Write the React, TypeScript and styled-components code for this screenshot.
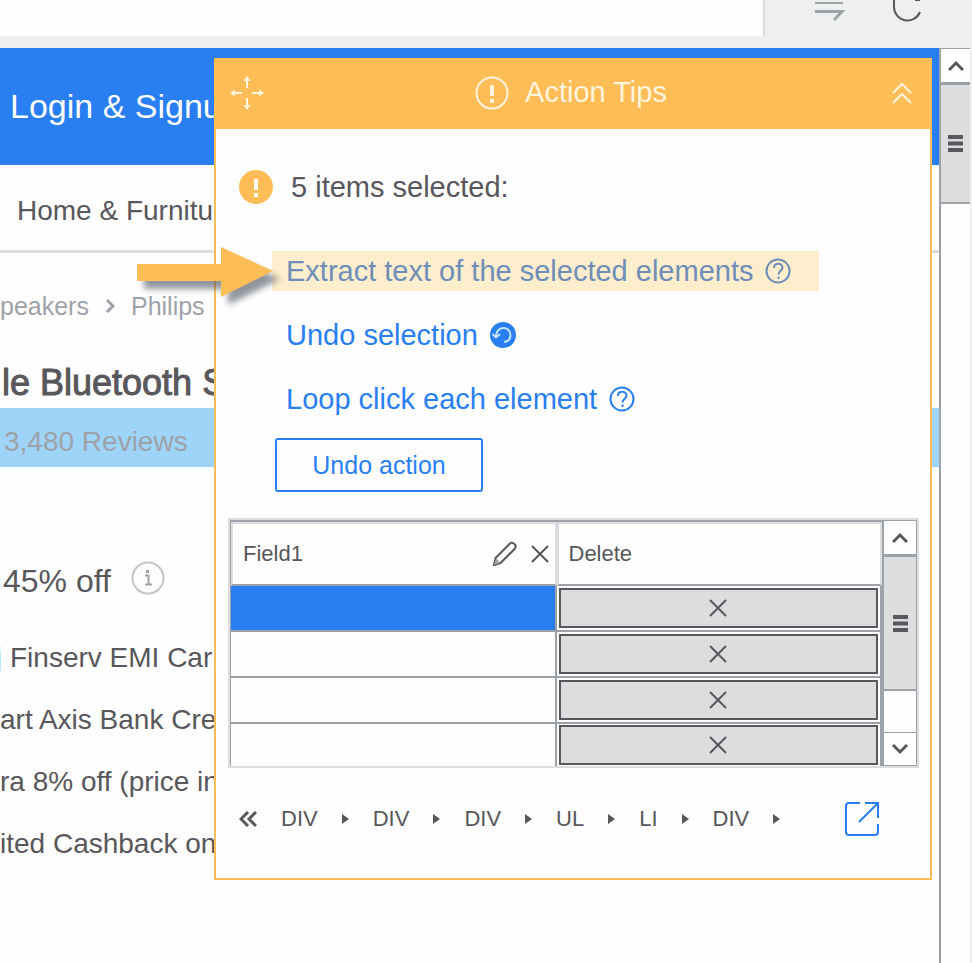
import React from "react";
import styled, { createGlobalStyle } from "styled-components";

const c = {
  blue: "#297ff2",
  sky: "#9fd4f9",
  orange: "#ffbd57",
  cream: "#feeecd",
  ink: "#58575b",
  grey: "#9da2a9",
  light: "#dcdddf",
  chrome: "#eeefef",
};

const GlobalStyle = createGlobalStyle`
  *, *::before, *::after { box-sizing: border-box; }
  html, body { margin: 0; padding: 0; }
  body {
    background: #fefefe;
    color: ${c.ink};
    font-family: "Liberation Sans", Arial, sans-serif;
    overflow: hidden;
  }
  button { font: inherit; color: inherit; background: none; border: 0; padding: 0; margin: 0; cursor: pointer; }
  a { color: inherit; text-decoration: none; }
  svg { display: block; flex: none; }
  h1, h2, p, ul, ol { margin: 0; padding: 0; list-style: none; font-weight: 400; }
`;

const Screen = styled.div`
  display: flex;
  flex-direction: column;
  min-height: 100vh;
`;

const BrowserBar = styled.header`
  display: flex;
  align-items: flex-start;
  height: 48px;
  background: ${c.chrome};
`;

const AddressArea = styled.div`
  flex: 1;
  height: 36px;
  background: #fefefe;
  border-right: 2px solid ${c.light};
`;

const BarTools = styled.div`
  display: flex;
  gap: 46px;
  padding: 0 49px 0 50px;
`;

const Viewport = styled.div`
  display: flex;
  flex: 1;
  border-right: 2px solid ${c.chrome};
`;

const Page = styled.main`
  position: relative;
  flex: 1;
  min-width: 0;
  white-space: nowrap;
`;

const SiteHeader = styled.div`
  display: flex;
  align-items: center;
  height: 117px;
  padding-left: 10px;
  background: ${c.blue};
  color: #fefefe;
  font-size: 34px;
`;

const SiteNav = styled.nav`
  display: flex;
  align-items: center;
  height: 88px;
  padding: 6px 0 0 17px;
  border-bottom: 3px solid ${c.light};
  font-size: 28px;
`;

const Trail = styled.nav`
  display: flex;
  align-items: center;
  gap: 16px;
  margin-top: 38px;
  font-size: 25px;
  line-height: 30px;
  color: ${c.grey};
`;

const ProductTitle = styled.h1`
  margin-top: 40px;
  padding-left: 2px;
  font-size: 36px;
  line-height: 44px;
  -webkit-text-stroke: 1px ${c.ink};
`;

const Reviews = styled.div`
  height: 59px;
  margin-top: 3px;
  padding: 14px 0 0 4px;
  background: ${c.sky};
  color: ${c.grey};
  font-size: 28px;
  line-height: 40px;
`;

const Discount = styled.div`
  display: flex;
  align-items: flex-start;
  gap: 20px;
  margin-top: 94px;
  padding-left: 3px;
  font-size: 32px;
  line-height: 40px;
`;

const Offers = styled.ul`
  margin-top: 26px;
  overflow: hidden;
`;

const Offer = styled.li<{ $shift?: number }>`
  height: 62px;
  font-size: 28px;
  line-height: 62px;
  text-indent: ${(p) => p.$shift ?? 0}px;
`;

const OfferLink = styled.a`
  color: ${c.sky};
`;

const Panel = styled.section`
  position: absolute;
  top: 10px;
  left: 214px;
  right: 7px;
  background: #fefefe;
  border: 2px solid ${c.orange};
`;

const PanelHead = styled.div`
  display: grid;
  grid-template-columns: 1fr auto 1fr;
  align-items: center;
  height: 69px;
  padding: 0 18px 4px 14px;
  background: ${c.orange};
  color: #fff4dc;
`;

const PanelTitle = styled.h2`
  display: flex;
  align-items: center;
  gap: 16px;
  font-size: 29px;
`;

const HeadButton = styled.button<{ $end?: boolean }>`
  justify-self: ${(p) => (p.$end ? "end" : "start")};
`;

const PanelBody = styled.div`
  padding: 38px 11px 41px 12px;
`;

const Status = styled.div`
  display: flex;
  align-items: center;
  gap: 18px;
  padding-left: 11px;
  font-size: 29px;
  line-height: 40px;
`;

const Actions = styled.ul`
  display: flex;
  flex-direction: column;
  align-items: flex-start;
  gap: 24px;
  margin: 44px 0 19px 44px;
`;

const Action = styled.button<{ $active?: boolean }>`
  display: flex;
  align-items: center;
  gap: 12px;
  height: 40px;
  padding: 0 28px 0 14px;
  background: ${(p) => (p.$active ? c.cream : "transparent")};
  color: ${(p) => (p.$active ? "#6f8db8" : c.blue)};
  font-size: 29px;
`;

const UndoButton = styled.button`
  display: block;
  width: 208px;
  height: 54px;
  margin-left: 47px;
  border: 2px solid ${c.blue};
  border-radius: 3px;
  color: ${c.blue};
  font-size: 25px;
`;

const GridFrame = styled.div`
  display: flex;
  margin-top: 26px;
  border: 2px solid ${c.light};
`;

const GridArea = styled.div`
  flex: 1;
  min-width: 0;
`;

const Grid = styled.table`
  width: 100%;
  table-layout: fixed;
  border-collapse: separate;
  border-spacing: 0;
  border-left: 1px solid ${c.grey};
  border-top: 2px solid ${c.grey};
`;

const HeadCell = styled.th`
  height: 64px;
  padding: 0 6px 0 10px;
  border: 2px solid ${c.light};
  border-bottom: 2px solid ${c.grey};
  text-align: left;
  font-size: 22px;
  font-weight: 400;
`;

const HeadRow = styled.div`
  display: flex;
  align-items: center;
  justify-content: space-between;
`;

const HeadTools = styled.div`
  display: flex;
  align-items: center;
  gap: 13px;
`;

const Cell = styled.td<{ $selected?: boolean; $last?: boolean }>`
  height: ${(p) => (p.$last ? 42 : 46)}px;
  padding: 0;
  border-right: 2px solid ${c.grey};
  border-bottom: ${(p) => (p.$last ? 0 : 2)}px solid ${c.grey};
  background: ${(p) => (p.$selected ? c.blue : "#fefefe")};
`;

const DeleteButton = styled.button`
  display: flex;
  align-items: center;
  justify-content: center;
  width: calc(100% - 4px);
  height: 40px;
  margin: 0 2px;
  background: ${c.light};
  border: 2px solid ${c.ink};
`;

const Scrollbar = styled.div<{ $width: number; $framed?: boolean }>`
  display: flex;
  flex: none;
  flex-direction: column;
  width: ${(p) => p.$width}px;
  border-left: 2px solid ${c.grey};
  border-right: ${(p) => (p.$framed ? 1 : 0)}px solid ${c.grey};
  background: #fefefe;
`;

const ScrollButton = styled.button<{ $end?: boolean }>`
  display: flex;
  align-items: center;
  justify-content: center;
  height: 34px;
  border-top: 1px solid ${c.grey};
  border-bottom: ${(p) => (p.$end ? 1 : 0)}px solid ${c.grey};
  margin-top: ${(p) => (p.$end ? "auto" : "0")};
`;

const Thumb = styled.div<{ $height: number }>`
  display: flex;
  align-items: center;
  justify-content: center;
  height: ${(p) => p.$height}px;
  background: ${c.light};
  border-top: 3px solid ${c.grey};
  border-bottom: 2px solid ${c.grey};
`;

const PathRow = styled.div`
  display: flex;
  align-items: center;
  justify-content: space-between;
  height: 36px;
  margin-top: 33px;
  padding: 0 40px 0 11px;
`;

const PathList = styled.nav`
  display: flex;
  align-items: center;
  gap: 24px;
  font-size: 22px;
`;

const Pointer = styled.svg`
  position: absolute;
  top: 197px;
  left: 135px;
  overflow: visible;
  filter: drop-shadow(7px 8px 3px rgba(70, 76, 90, 0.6));
`;

const line = { fill: "none", stroke: "currentColor", strokeWidth: 2 } as const;

const ForwardIcon = () => (
  <svg width="32" height="20" viewBox="0 0 32 20" fill="none" stroke={c.grey} strokeWidth="3">
    <path d="M0 .5H28M0 9.500H27L19 18" />
  </svg>
);

const ReloadIcon = () => (
  <svg width="30" height="24" viewBox="0 0 30 24" {...line} stroke={c.ink}>
    <path d="M1 0V7A13.500 13.500 0 0 0 27 12M22 0H27" />
  </svg>
);

const Chevron = ({ down }: { down?: boolean }) => (
  <svg width="16" height="12" viewBox="0 0 16 12" fill="none" stroke={c.ink} strokeWidth="3">
    <path d={down ? "M1 2L8 9L15 2" : "M1 10L8 3L15 10"} />
  </svg>
);

const Grip = () => (
  <svg width="15" height="17" viewBox="0 0 15 17" fill={c.ink}>
    <path d="M0 0H15V4H0ZM0 6.500H15V10.500H0ZM0 13H15V17H0Z" />
  </svg>
);

const MoveIcon = () => (
  <svg width="34" height="34" viewBox="0 0 34 34" fill="currentColor">
    <path d="M17 0L20.500 5H18V12H16V5H13.500ZM17 34L13.500 29H16V22H18V29H20.500ZM0 17L5 13.500V16H12V18H5V20.500ZM34 17L29 20.500V18H22V16H29V13.500Z" />
  </svg>
);

const AlertIcon = ({ filled }: { filled?: boolean }) => (
  <svg width="34" height="34" viewBox="0 0 34 34">
    <circle cx="17" cy="17" r={filled ? 17 : 15.5} fill={filled ? c.orange : "none"} stroke={filled ? "none" : "currentColor"} strokeWidth="2" />
    <path d="M15 9H19V20H15ZM15 23H19V27H15Z" fill={filled ? "#fefefe" : "currentColor"} />
  </svg>
);

const CollapseIcon = () => (
  <svg width="20" height="22" viewBox="0 0 20 22" {...line}>
    <path d="M1 11L10 2L19 11M1 21L10 12L19 21" />
  </svg>
);

const HelpIcon = () => (
  <svg width="26" height="26" viewBox="0 0 26 26" {...line}>
    <circle cx="13" cy="13" r="11.500" />
    <path d="M9 10C9 4.500 17.500 4.500 17.500 9.500C17.500 13 13.500 12.500 13.500 16.500M13.500 18.500V21" />
  </svg>
);

const UndoIcon = () => (
  <svg width="26" height="26" viewBox="0 0 26 26" fill="none">
    <circle cx="13" cy="13" r="13" fill={c.blue} />
    <path d="M6 14C6 4 20 3 20.500 13C20.500 17 18 19.500 14 20M2.500 12L6 15.500L10 12" stroke="#c4e4fb" strokeWidth="2" />
  </svg>
);

const InfoIcon = () => (
  <svg width="34" height="34" viewBox="0 0 34 34" fill="none">
    <circle cx="17" cy="17" r="15.500" stroke="#c3c5c9" strokeWidth="2" />
    <path d="M14 14.500H17.500V23M14 23.500H21" stroke={c.grey} strokeWidth="2" />
    <rect x="15" y="9" width="3" height="3" fill={c.grey} />
  </svg>
);

const PencilIcon = () => (
  <svg width="26" height="26" viewBox="0 0 26 26" {...line}>
    <path d="M2 24L3.500 17L18 2.500C20 .5 25.500 3.500 23 7.500L8.500 22Z" />
    <path d="M4 17L8 22L2 24Z" fill={c.grey} stroke="none" />
  </svg>
);

const CrossIcon = () => (
  <svg width="18" height="18" viewBox="0 0 18 18" {...line}>
    <path d="M1 1L17 17M17 1L1 17" />
  </svg>
);

const BackIcon = () => (
  <svg width="18" height="16" viewBox="0 0 18 16" fill="none" stroke={c.ink} strokeWidth="3">
    <path d="M9 1L2 8L9 15M17 1L10 8L17 15" />
  </svg>
);

const Caret = () => (
  <svg width="7" height="12" viewBox="0 0 7 12" fill={c.ink}>
    <path d="M0 1L7 6L0 11Z" />
  </svg>
);

const OpenIcon = () => (
  <svg width="34" height="34" viewBox="0 0 34 34" fill="none" stroke={c.blue} strokeWidth="2">
    <path d="M15 1H4Q1 1 1 4V30Q1 33 4 33H30Q33 33 33 30V22M20 1H33V16M33 1L14 20" />
  </svg>
);

const rows = [0, 1, 2, 3];
const path = ["DIV", "DIV", "DIV", "UL", "LI", "DIV"];

export default function App() {
  return (
    <Screen>
      <GlobalStyle />
      <BrowserBar>
        <AddressArea />
        <BarTools>
          <button aria-label="Forward"><ForwardIcon /></button>
          <button aria-label="Reload"><ReloadIcon /></button>
        </BarTools>
      </BrowserBar>
      <Viewport>
        <Page>
          <SiteHeader><a href="#login">Login &amp; Signu</a></SiteHeader>
          <SiteNav><a href="#home">Home &amp; Furnitu</a></SiteNav>
          <Trail>
            <a href="#speakers">peakers</a>
            <svg width="10" height="16" viewBox="0 0 10 16" fill="none" stroke={c.grey} strokeWidth="3">
              <path d="M2 2L8 8L2 14" />
            </svg>
            <a href="#philips">Philips</a>
          </Trail>
          <ProductTitle>le Bluetooth S</ProductTitle>
          <Reviews>3,480 Reviews</Reviews>
          <Discount>
            <span>45% off</span>
            <button aria-label="Offer details"><InfoIcon /></button>
          </Discount>
          <Offers>
            <Offer $shift={-4}><OfferLink href="#emi">j</OfferLink> Finserv EMI Car</Offer>
            <Offer>art Axis Bank Cre</Offer>
            <Offer>ra 8% off (price in</Offer>
            <Offer>ited Cashback on</Offer>
          </Offers>

          <Panel>
            <PanelHead>
              <HeadButton aria-label="Move panel"><MoveIcon /></HeadButton>
              <PanelTitle><AlertIcon />Action Tips</PanelTitle>
              <HeadButton $end aria-label="Collapse panel"><CollapseIcon /></HeadButton>
            </PanelHead>
            <PanelBody>
              <Status><AlertIcon filled /><p>5 items selected:</p></Status>
              <Actions>
                <li><Action $active>Extract text of the selected elements<HelpIcon /></Action></li>
                <li><Action>Undo selection<UndoIcon /></Action></li>
                <li><Action>Loop click each element<HelpIcon /></Action></li>
              </Actions>
              <UndoButton>Undo action</UndoButton>
              <GridFrame>
                <GridArea>
                  <Grid>
                    <thead>
                      <tr>
                        <HeadCell>
                          <HeadRow>
                            Field1
                            <HeadTools>
                              <button aria-label="Rename field"><PencilIcon /></button>
                              <button aria-label="Remove field"><CrossIcon /></button>
                            </HeadTools>
                          </HeadRow>
                        </HeadCell>
                        <HeadCell>Delete</HeadCell>
                      </tr>
                    </thead>
                    <tbody>
                      {rows.map((r) => (
                        <tr key={r}>
                          <Cell $selected={r === 0} $last={r === 3} />
                          <Cell $last={r === 3}>
                            <DeleteButton aria-label="Delete row"><CrossIcon /></DeleteButton>
                          </Cell>
                        </tr>
                      ))}
                    </tbody>
                  </Grid>
                </GridArea>
                <Scrollbar $width={35} $framed>
                  <ScrollButton aria-label="Scroll up"><Chevron /></ScrollButton>
                  <Thumb $height={137}><Grip /></Thumb>
                  <ScrollButton $end aria-label="Scroll down"><Chevron down /></ScrollButton>
                </Scrollbar>
              </GridFrame>
              <PathRow>
                <PathList>
                  <button aria-label="Back"><BackIcon /></button>
                  {path.map((tag, i) => (
                    <React.Fragment key={i}>
                      <a href="#node">{tag}</a>
                      <Caret />
                    </React.Fragment>
                  ))}
                </PathList>
                <button aria-label="Open path editor"><OpenIcon /></button>
              </PathRow>
            </PanelBody>
          </Panel>

          <Pointer width="140" height="54" viewBox="0 0 140 54" fill={c.orange}>
            <path d="M2 19H86V2L138 26L86 52V36H2Z" />
          </Pointer>
        </Page>
        <Scrollbar $width={31}>
          <ScrollButton aria-label="Scroll up"><Chevron /></ScrollButton>
          <Thumb $height={122}><Grip /></Thumb>
        </Scrollbar>
      </Viewport>
    </Screen>
  );
}
